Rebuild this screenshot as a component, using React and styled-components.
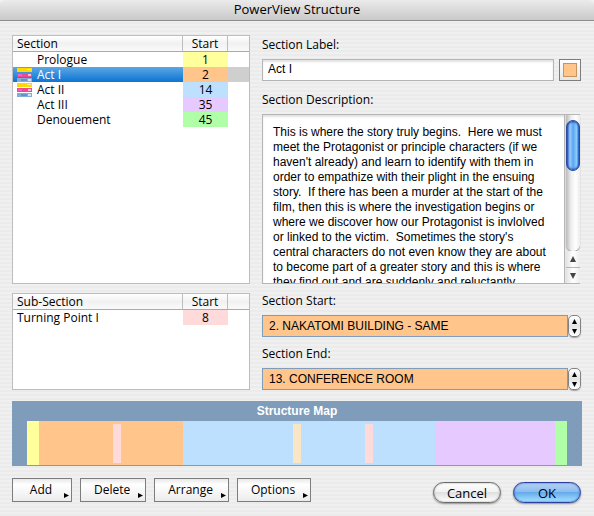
import { useState } from "react";
import styled, { createGlobalStyle, css } from "styled-components";

const sections = [
    { name: "Prologue", start: 1, length: 1, color: "#ffff9c" },
    { name: "Act I", start: 2, length: 12, color: "#ffc58b", icon: true },
    { name: "Act II", start: 14, length: 21, color: "#bde0ff", icon: true },
    { name: "Act III", start: 35, length: 10, color: "#e5c9ff" },
    { name: "Denouement", start: 45, length: 1, color: "#b0ffa8" },
];

const subSections = [{ name: "Turning Point I", start: 8, color: "#ffdada" }];

const markers = [
    { scene: 8, color: "#ffdada" },
    { scene: 23, color: "#fae6c4" },
    { scene: 29, color: "#ffdada" },
];

const menus = ["Add", "Delete", "Arrange", "Options"];

const description = `This is where the story truly begins.  Here we must
meet the Protagonist or principle characters (if we
haven't already) and learn to identify with them in
order to empathize with their plight in the ensuing
story.  If there has been a murder at the start of the
film, then this is where the investigation begins or
where we discover how our Protagonist is invlolved
or linked to the victim.  Sometimes the story's
central characters do not even know they are about
to become part of a greater story and this is where
they find out and are suddenly and reluctantly`;

const BarsIcon = () => (
    <svg width="15" height="15" viewBox="0 0 15 15" aria-hidden="true">
        <rect y="1" width="15" height="4" fill="#ffd800" />
        <rect x="10" y="2" width="4" height="1" fill="#ffec8f" />
        <rect y="6" width="15" height="4" fill="#ea4b92" />
        <rect x="1" y="7" width="4" height="2" fill="#f25fd0" />
        <rect x="11" y="7" width="3" height="2" fill="#f8bcd8" />
        <rect y="11" width="15" height="4" fill="#85abd9" />
        <rect x="4" y="12" width="6" height="2" fill="#6590c8" />
        <rect x="11" y="12" width="3" height="2" fill="#d5e4f5" />
    </svg>
);

const Arrow = ({ dir, size = 5 }) => {
    const points = { up: "0,6 3,0 6,6", down: "0,0 6,0 3,6", right: "0,0 6,3 0,6" };
    return (
        <svg width={size} height={size} viewBox="0 0 6 6" aria-hidden="true">
            <polygon points={points[dir]} fill="currentColor" />
        </svg>
    );
};

const SectionTable = ({ title, rows, indent, selected, onSelect }) => (
    <Table>
        <colgroup>
            <col />
            <col width="45" />
            <col width="21" />
        </colgroup>
        <thead>
            <tr>
                <HeadCell>{title}</HeadCell>
                <HeadCell $center>Start</HeadCell>
                <HeadCell $last />
            </tr>
        </thead>
        <tbody>
            {rows.map((row) => (
                <Row key={row.name} $selected={row.name === selected} onClick={() => onSelect?.(row.name)}>
                    <td>
                        <Name>
                            {indent && <IconSlot>{row.icon && <BarsIcon />}</IconSlot>}
                            {row.name}
                        </Name>
                    </td>
                    <StartCell $color={row.color}>{row.start}</StartCell>
                    <td />
                </Row>
            ))}
        </tbody>
    </Table>
);

const SceneField = ({ id, label, value }) => (
    <Field>
        <Label htmlFor={id}>{label}</Label>
        <FieldRow>
            <SceneInput id={id} defaultValue={value} readOnly />
            <Stepper>
                <StepButton aria-label={`${label} previous`}><Arrow dir="up" /></StepButton>
                <StepButton aria-label={`${label} next`}><Arrow dir="down" /></StepButton>
            </Stepper>
        </FieldRow>
    </Field>
);

const App = () => {
    const [selected, setSelected] = useState("Act I");

    return (
        <Window>
            <GlobalStyle />
            <TitleBar>PowerView Structure</TitleBar>
            <Body>
                <Columns>
                    <Lists>
                        <ListBox $grow>
                            <SectionTable title="Section" rows={sections} indent selected={selected} onSelect={setSelected} />
                        </ListBox>
                        <ListBox>
                            <SectionTable title="Sub-Section" rows={subSections} />
                        </ListBox>
                    </Lists>
                    <Form>
                        <Field>
                            <Label htmlFor="label">Section Label:</Label>
                            <FieldRow $tall>
                                <TextInput id="label" defaultValue="Act I" />
                                <SwatchButton aria-label="Section color"><Swatch /></SwatchButton>
                            </FieldRow>
                        </Field>
                        <Field>
                            <Label htmlFor="description">Section Description:</Label>
                            <DescriptionBox>
                                <TextArea id="description" defaultValue={description} spellCheck={false} />
                                <ScrollBar>
                                    <Track><Thumb /></Track>
                                    <ScrollButton aria-label="Scroll up"><Arrow dir="up" size={6} /></ScrollButton>
                                    <ScrollButton aria-label="Scroll down"><Arrow dir="down" size={6} /></ScrollButton>
                                </ScrollBar>
                            </DescriptionBox>
                        </Field>
                        <SceneField id="start" label="Section Start:" value="2. NAKATOMI BUILDING - SAME" />
                        <SceneField id="end" label="Section End:" value="13. CONFERENCE ROOM" />
                    </Form>
                </Columns>

                <StructureMap>
                    <MapTitle>Structure Map</MapTitle>
                    <Strip>
                        {sections.map((s) => (
                            <Segment key={s.name} $start={s.start} $length={s.length} $color={s.color} />
                        ))}
                        {markers.map((m) => (
                            <Marker key={m.scene} $scene={m.scene} $color={m.color} />
                        ))}
                    </Strip>
                </StructureMap>

                <Footer>
                    <ButtonGroup>
                        {menus.map((m) => (
                            <MenuButton key={m}>
                                <MenuText>{m}</MenuText>
                                <MenuArrow><Arrow dir="right" /></MenuArrow>
                            </MenuButton>
                        ))}
                    </ButtonGroup>
                    <Actions>
                        <PillButton>Cancel</PillButton>
                        <PillButton $primary>OK</PillButton>
                    </Actions>
                </Footer>
            </Body>
        </Window>
    );
};

export default App;


const GlobalStyle = createGlobalStyle`
    * { box-sizing: border-box; }
    body {
        margin: 0;
        background: #ededed;
        font-family: "Open Sans", "Noto Sans", sans-serif;
        font-size: 12px;
        color: #000;
    }
    button, input, textarea {
        font: inherit;
        color: inherit;
        margin: 0;
        border-radius: 0;
        outline: none;
    }
`

const Window = styled.main`
    min-height: 100vh;
    background: repeating-linear-gradient(#f0f0f0 0 2px, #ebebeb 2px 4px);
`
const TitleBar = styled.h1`
    margin: 0;
    height: 21px;
    line-height: 19px;
    text-align: center;
    font-size: 13px;
    font-weight: 400;
    background: linear-gradient(#ebebeb, #c9c9c9);
    border-bottom: 1px solid #8c8c8c;
    border-radius: 6px 6px 0 0;
`
const Body = styled.div`
    padding: 14px 12px 13px;
`
const Columns = styled.div`
    display: grid;
    grid-template-columns: 238px 1fr;
    gap: 12px;
`
const Lists = styled.div`
    display: flex;
    flex-direction: column;
    gap: 9px;
`
const ListBox = styled.section`
    min-height: 97px;
    flex: ${({ $grow }) => ($grow ? "1" : "none")};
    background: #fff;
    border: 1px solid #bdbdbd;
`
const Table = styled.table`
    width: 100%;
    table-layout: fixed;
    border-collapse: separate;
    border-spacing: 0;
    line-height: 15px;

    td, th { padding: 0; }
`
const HeadCell = styled.th`
    height: 16px;
    && { padding-left: ${({ $center }) => ($center ? "0" : "4px")}; }
    text-align: ${({ $center }) => ($center ? "center" : "left")};
    font-weight: 400;
    background: linear-gradient(#fff, #f1f1f1 50%, #fafafa);
    border-bottom: 1px solid #a9a9a9;
    border-right: ${({ $last }) => ($last ? "none" : "1px solid #bdbdbd")};
`
const StartCell = styled.td`
    text-align: center;
    background: ${({ $color }) => $color};
`
const Row = styled.tr`
    height: 15px;

    ${({ $selected }) => $selected && css`
        td:first-child {
            color: #fff;
            background: linear-gradient(#5ba7e4, #0d74d3);
        }
        td:last-child { background: #cfcfcf; }
    `}
`
const Name = styled.span`
    display: flex;
    gap: 5px;
    height: 15px;
    padding-left: 4px;
`
const IconSlot = styled.span`
    width: 15px;
    height: 15px;
    display: flex;
    align-items: flex-end;
`
const Form = styled.div`
    display: flex;
    flex-direction: column;
    gap: 7px;
`
const Field = styled.div`
    display: flex;
    flex-direction: column;
    gap: 4px;
`
const Label = styled.label`
    line-height: 20px;
`
const FieldRow = styled.div`
    display: flex;
    align-items: flex-start;
    min-height: ${({ $tall }) => ($tall ? "24px" : "22px")};
`
const TextInput = styled.input`
    flex: 1;
    min-width: 0;
    height: 22px;
    margin-right: 5px;
    padding: 0 5px 2px;
    font-family: "Liberation Sans", Arial, sans-serif;
    background: #fff;
    border: 1px solid #b5b5b5;
    box-shadow: inset 0 2px 2px #e3e3e3;
`
const SwatchButton = styled.button`
    display: flex;
    width: 22px;
    height: 22px;
    margin-right: 1px;
    padding: 3px;
    border: 1px solid #7d7d7d;
    background: linear-gradient(#fff, #e6e6e6);
`
const Swatch = styled.span`
    flex: 1;
    background: #ffc58b;
    border: 1px solid #c9945c;
`
const DescriptionBox = styled.div`
    display: flex;
    height: 170px;
    margin-right: 2px;
    background: #fff;
    border: 1px solid #b5b5b5;
    border-right: none;
    box-shadow: inset 0 2px 2px #e3e3e3;
`
const TextArea = styled.textarea`
    flex: 1;
    min-width: 0;
    padding: 10px 0 0 10px;
    border: none;
    resize: none;
    overflow: hidden;
    white-space: pre;
    background: transparent;
    font-family: "Liberation Sans", Arial, sans-serif;
    line-height: 15px;
`
const ScrollBar = styled.div`
    display: flex;
    flex-direction: column;
    width: 16px;
    padding-left: 1px;
    border-left: 1px solid #b5b5b5;
    background: #e6e6e6;
`
const Track = styled.div`
    flex: 1;
    padding-top: 5px;
    border-radius: 0 0 7px 7px;
    background: linear-gradient(90deg, #b9b9b9, #ededed 35%, #fff 70%, #ececec);
    box-shadow: 0 1px 1px #8f8f8f;
`
const Thumb = styled.div`
    width: 14px;
    height: 51px;
    border: 1px solid #2d4a9c;
    border-radius: 7px;
    background: linear-gradient(90deg, #2a5fd0, #9dcdf8 25%, #5aa5f2 50%, #8accfd 80%, #3a78d4);
    box-shadow: inset 0 1px 2px #1a3fae, inset 0 -1px 2px #1d57c0;
`
const ScrollButton = styled.button`
    display: flex;
    align-items: center;
    justify-content: center;
    height: 16px;
    padding: 0;
    border: none;
    color: #444;
    background: linear-gradient(90deg, #e2e2e2, #fff 50%, #ececec);

    & + & { border-top: 1px solid #b5b5b5; }
`
const SceneInput = styled.input`
    flex: 1;
    min-width: 0;
    height: 22px;
    padding: 0 6px;
    font-family: "Liberation Sans", Arial, sans-serif;
    background: #ffc58b;
    border: 1px solid #7f9cba;
`
const Stepper = styled.div`
    display: flex;
    flex-direction: column;
    width: 13px;
    height: 22px;
    margin-right: 1px;
    border: 1px solid #828282;
    border-radius: 5px;
    background: linear-gradient(#fff, #e4e4e4 50%, #fff);
    box-shadow: 0 1px 1px #a5a5a5;
`
const StepButton = styled.button`
    flex: 1;
    display: flex;
    align-items: center;
    justify-content: center;
    padding: 0;
    border: none;
    background: none;
`
const StructureMap = styled.section`
    margin-top: 11px;
    padding: 0 15px 1px;
    background: #7f9cba;
`
const MapTitle = styled.h2`
    margin: 0;
    text-align: center;
    font: bold 12px/20px "Liberation Sans", Arial, sans-serif;
    color: #fff;
`
// one column per scene
const Strip = styled.div`
    display: grid;
    grid-template-columns: repeat(45, 1fr);
    grid-template-rows: 44px;
`
const Segment = styled.div`
    grid-row: 1;
    grid-column: ${({ $start, $length }) => `${$start} / span ${$length}`};
    background: ${({ $color }) => $color};
`
const Marker = styled.div`
    grid-row: 1;
    grid-column: ${({ $scene }) => $scene};
    margin: 3px 2px 2px;
    background: ${({ $color }) => $color};
`
const Footer = styled.footer`
    display: flex;
    justify-content: space-between;
    margin-top: 12px;
`
const ButtonGroup = styled.div`
    display: flex;
    align-items: flex-start;
    gap: 8px;
`
const MenuButton = styled.button`
    display: flex;
    min-width: 60px;
    height: 24px;
    padding: 0 2px 0 13px;
    border: 1px solid #7d7d7d;
    line-height: 22px;
    background: linear-gradient(#e9e9e9, #fff 25%, #ececec);
`
const MenuText = styled.span`
    flex: 1;
    text-align: center;
`
const MenuArrow = styled.span`
    display: flex;
    align-self: flex-end;
    justify-content: flex-end;
    width: 13px;
    padding-bottom: 3px;
`
const Actions = styled.div`
    display: flex;
    gap: 12px;
    padding: 4px 1px 0 0;
`
const PillButton = styled.button`
    width: 68px;
    height: 21px;
    padding: 0;
    border: 1px solid ${({ $primary }) => ($primary ? "#2a3f9c" : "#6b6b6b")};
    border-radius: 11px;
    font-size: 13px;
    line-height: 18px;
    background: ${({ $primary }) => ($primary
        ? "linear-gradient(#b5d3f3, #8dbdf0 45%, #66abec 50%, #a6e2ff)"
        : "linear-gradient(#fff, #f2f2f2 45%, #e0e0e0 50%, #fff)")};
    box-shadow: 0 1px 2px #8f8f8f, inset 0 0 2px ${({ $primary }) => ($primary ? "#2355b8" : "#9a9a9a")};
`
